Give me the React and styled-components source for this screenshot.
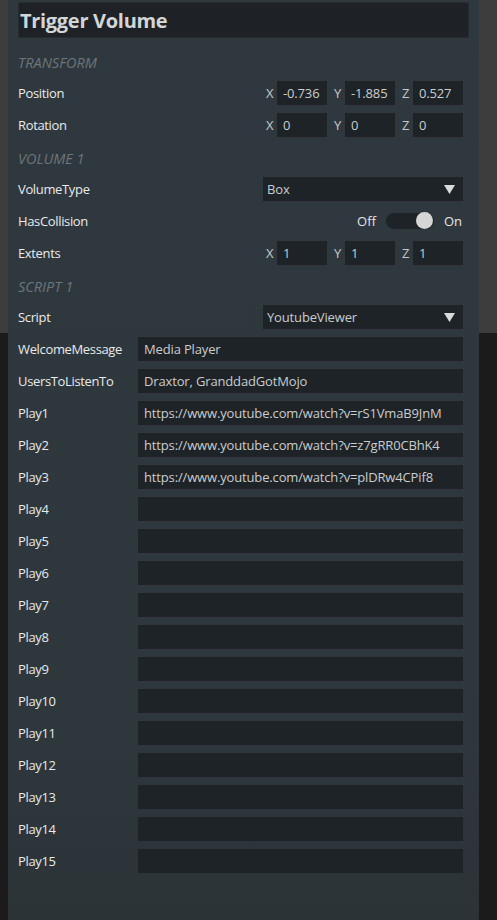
import React from 'react';
import styled, { createGlobalStyle } from 'styled-components';

const GlobalStyle = createGlobalStyle`
  html, body {
    margin: 0;
    padding: 0;
  }
  body {
    width: 497px;
    height: 920px;
    overflow: hidden;
    font-family: "Open Sans", "Noto Sans", sans-serif;
    background: linear-gradient(to bottom, #3d3d3d 0, #3d3d3d 333px, #1b1b1b 333px, #1b1b1b 100%);
  }
`;

const Page = styled.div`
  display: flex;
  height: 920px;
  padding-left: 8px;
`;

const Panel = styled.div`
  width: 471px;
  height: 920px;
  box-sizing: border-box;
  padding: 2px 16px 0 10px;
  background: linear-gradient(to bottom, #2f383e 0%, #2e373c 80%, #2b3337 100%);
`;

const TitleBox = styled.div`
  height: 36px;
  margin-right: -6px;
  box-sizing: border-box;
  padding: 0 0 0 1px;
  display: flex;
  align-items: center;
  background: #1e2226;
  border: 1px solid #262c30;
  color: #d2d6d8;
  font-size: 20px;
  font-weight: 700;
  letter-spacing: -0.3px;
  margin-bottom: 7px;
`;

const Header = styled.div`
  height: 32px;
  display: flex;
  align-items: center;
  padding-top: 2px;
  box-sizing: border-box;
  font-size: 14.5px;
  font-style: italic;
  text-transform: uppercase;
  color: #6b757b;
  letter-spacing: 0;
`;

const Row = styled.div`
  height: 32px;
  display: flex;
  align-items: center;
  justify-content: space-between;
`;

const Label = styled.span`
  font-size: 13px;
  color: #e8eaec;
  letter-spacing: -0.35px;
`;

const Field = styled.div`
  width: ${p => p.$w}px;
  height: 24px;
  box-sizing: border-box;
  padding-left: 6px;
  display: flex;
  align-items: center;
  background: #1e2327;
  color: #c9cdcf;
  font-size: 13px;
  white-space: nowrap;
  overflow: hidden;
  letter-spacing: -0.15px;
`;

const Vector = styled.div`
  display: flex;
  align-items: center;
`;

const Axis = styled.span`
  width: 11px;
  margin-left: ${p => (p.$first ? 0 : 7)}px;
  font-size: 13px;
  color: #c6cacc;
`;

const Select = styled(Field)`
  justify-content: space-between;
  padding-right: 8px;
  padding-left: 4px;
`;

const Arrow = styled.svg`
  width: 11px;
  height: 9px;
`;

const Toggle = styled.div`
  display: flex;
  align-items: center;
  gap: 10px;
  font-size: 13px;
  color: #e2e4e6;
  padding-right: 1px;
`;

const Track = styled.div`
  width: 48px;
  height: 16px;
  border-radius: 8px;
  background: #1e2327;
  position: relative;
`;

const Knob = styled.div`
  position: absolute;
  right: 1px;
  top: -1px;
  width: 17px;
  height: 17px;
  border-radius: 50%;
  background: #d6d6d6;
`;

function Vec({ values }) {
  return (
    <Vector>
      {['X', 'Y', 'Z'].map((a, i) => (
        <React.Fragment key={a}>
          <Axis $first={i === 0}>{a}</Axis>
          <Field $w={50}>{values[i]}</Field>
        </React.Fragment>
      ))}
    </Vector>
  );
}

function Dropdown({ value }) {
  return (
    <Select $w={200}>
      {value}
      <Arrow viewBox="0 0 11 9">
        <path d="M0 0 H11 L5.5 9 Z" fill="#d8dadc" />
      </Arrow>
    </Select>
  );
}

const textProps = [
  ['WelcomeMessage', 'Media Player'],
  ['UsersToListenTo', 'Draxtor, GranddadGotMojo'],
  ['Play1', 'https://www.youtube.com/watch?v=rS1VmaB9JnM'],
  ['Play2', 'https://www.youtube.com/watch?v=z7gRR0CBhK4'],
  ['Play3', 'https://www.youtube.com/watch?v=plDRw4CPif8'],
];
for (let i = 4; i <= 15; i++) textProps.push(['Play' + i, '']);

export default function App() {
  return (
    <>
      <GlobalStyle />
      <Page>
        <Panel>
          <TitleBox>Trigger Volume</TitleBox>
          <Header>Transform</Header>
          <Row>
            <Label>Position</Label>
            <Vec values={['-0.736', '-1.885', '0.527']} />
          </Row>
          <Row>
            <Label>Rotation</Label>
            <Vec values={['0', '0', '0']} />
          </Row>
          <Header>Volume 1</Header>
          <Row>
            <Label>VolumeType</Label>
            <Dropdown value="Box" />
          </Row>
          <Row>
            <Label>HasCollision</Label>
            <Toggle>
              Off
              <Track><Knob /></Track>
              On
            </Toggle>
          </Row>
          <Row>
            <Label>Extents</Label>
            <Vec values={['1', '1', '1']} />
          </Row>
          <Header>Script 1</Header>
          <Row>
            <Label>Script</Label>
            <Dropdown value="YoutubeViewer" />
          </Row>
          {textProps.map(([k, v]) => (
            <Row key={k}>
              <Label>{k}</Label>
              <Field $w={325}>{v}</Field>
            </Row>
          ))}
        </Panel>
      </Page>
    </>
  );
}
